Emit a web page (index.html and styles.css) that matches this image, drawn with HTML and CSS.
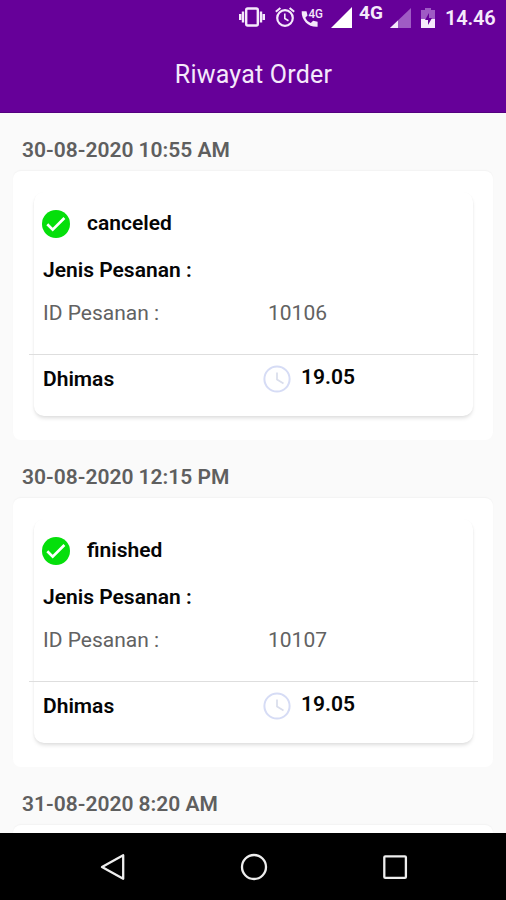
FILE: index.html
```html
<!DOCTYPE html>
<html lang="id">
<head>
<meta charset="utf-8">
<title>Riwayat Order</title>
<link rel="stylesheet" href="styles.css">
</head>
<body>
<header class="top">
  <div class="status">
    <svg class="vibrate" width="26" height="20" viewBox="0 0 26 20"><rect x="7.2" y="1.5" width="11.6" height="17" rx="1.5" fill="none" stroke="currentColor" stroke-width="2.4"/><path d="M1.2 7v6M4 4.5v11M24.8 7v6M22 4.5v11" stroke="currentColor" stroke-width="2.4"/></svg>
    <svg class="alarm" width="20" height="20" viewBox="0 0 20 20" fill="none" stroke="currentColor"><circle cx="10" cy="11" r="7.8" stroke-width="2.2"/><path d="M.8 4.7 5.4.9M19.2 4.7 14.6.9" stroke-width="2"/><path d="M9.8 6.5v5l3.7 2.3" stroke-width="1.6"/></svg>
    <svg class="call" width="23" height="22" viewBox="0 0 23 22"><path d="M.7 4.2h4.8l1 4.2-2.2 2.3c1.2 2.5 3 4.2 5.5 5.3l2.3-2.2 4.5 1v5C8 20.6.2 13.5.7 4.2Z" fill="currentColor"/><text x="7.5" y="11.2" class="call-label" textLength="14.5" lengthAdjust="spacingAndGlyphs">4G</text></svg>
    <svg class="signal" width="21" height="21" viewBox="0 0 21 21"><path d="M0 21 21 0v21Z" fill="currentColor"/></svg>
    <span class="network">4G</span>
    <svg class="signal-low" width="21" height="21" viewBox="0 0 21 21"><path d="M0 21 21 1v20Z" fill="#9f5bc4"/><path d="m0 21 8-7.6V21Z" fill="currentColor"/></svg>
    <svg class="battery" width="14" height="20" viewBox="0 0 14 20"><path d="M4 0h6v2h4v9H0V2h4Z" fill="#9f5bc4"/><path d="M0 11h14v9H0Z" fill="currentColor"/><path d="M8 5 4 12h3v5l4-7H8Z" fill="#609"/></svg>
    <span class="clock">14.46</span>
  </div>
  <h1 class="title">Riwayat Order</h1>
</header>
<main class="list">
  <section class="entry">
    <h2 class="date">30-08-2020 10:55 AM</h2>
    <div class="panel">
      <article class="card">
        <div class="state">
          <svg width="28" height="28" viewBox="0 0 28 28"><circle cx="14" cy="14" r="14" fill="#05df0b"/><path d="m5.3 14.3 5.4 5.3L22.4 8" fill="none" stroke="#fff" stroke-width="2.7"/></svg>
          <span class="state-name">canceled</span>
        </div>
        <div class="kind">Jenis Pesanan :</div>
        <div class="order"><span>ID Pesanan :</span><span>10106</span></div>
        <div class="foot">
          <span class="person">Dhimas</span>
          <svg width="28" height="28" viewBox="0 0 28 28" fill="none"><circle cx="14" cy="14" r="12.6" stroke="#d6dcf5" stroke-width="2"/><path d="M14 7.5v7l6.5 4" stroke="#d9ddec" stroke-width="1.7"/></svg>
          <span class="time">19.05</span>
        </div>
      </article>
    </div>
  </section>
  <section class="entry">
    <h2 class="date">30-08-2020 12:15 PM</h2>
    <div class="panel">
      <article class="card">
        <div class="state">
          <svg width="28" height="28" viewBox="0 0 28 28"><circle cx="14" cy="14" r="14" fill="#05df0b"/><path d="m5.3 14.3 5.4 5.3L22.4 8" fill="none" stroke="#fff" stroke-width="2.7"/></svg>
          <span class="state-name">finished</span>
        </div>
        <div class="kind">Jenis Pesanan :</div>
        <div class="order"><span>ID Pesanan :</span><span>10107</span></div>
        <div class="foot">
          <span class="person">Dhimas</span>
          <svg width="28" height="28" viewBox="0 0 28 28" fill="none"><circle cx="14" cy="14" r="12.6" stroke="#d6dcf5" stroke-width="2"/><path d="M14 7.5v7l6.5 4" stroke="#d9ddec" stroke-width="1.7"/></svg>
          <span class="time">19.05</span>
        </div>
      </article>
    </div>
  </section>
  <section class="entry">
    <h2 class="date">31-08-2020 8:20 AM</h2>
    <div class="panel"></div>
  </section>
</main>
<nav class="nav">
  <svg width="28" height="28" viewBox="0 0 28 28"><path d="M3 14 24.2 2.2v23.6Z"/></svg>
  <svg width="28" height="28" viewBox="0 0 28 28"><circle cx="14" cy="14" r="12"/></svg>
  <svg width="28" height="28" viewBox="0 0 28 28"><rect x="3.3" y="3.3" width="21.6" height="21.6" rx="1"/></svg>
</nav>
</body>
</html>
```
FILE: styles.css
```css
* { box-sizing: border-box; }
body {
  margin: 0;
  height: 900px;
  display: flex;
  flex-direction: column;
  overflow: hidden;
  background: #fafafa;
  font-family: Roboto, sans-serif;
  color: #050505;
}
svg { display: block; flex: none; overflow: visible; }
.top {
  height: 113px;
  flex: none;
  background: #660099;
  border-bottom: 1px solid #54007f;
}
.status {
  height: 36px;
  display: flex;
  padding: 7px 0 0 239px;
  color: #f5e9fb;
}
.vibrate { margin-right: 10px; }
.alarm { margin-right: 6px; }
.call { margin-right: 7px; }
.call-label { font-size: 13px; font-weight: 500; fill: currentColor; }
.signal { margin-right: 7px; color: #fff; }
.network {
  width: 31px;
  margin-top: -4px;
  font-size: 19px;
  line-height: 20px;
  font-weight: 700;
}
.signal-low { margin-right: 10px; }
.battery { margin: 1px 10px 0 0; }
.clock {
  font-size: 20px;
  line-height: 22px;
  font-weight: 600;
  letter-spacing: -.2px;
}
.title {
  margin: 23px 0 0;
  padding-left: 1px;
  text-align: center;
  font-size: 25px;
  line-height: 32px;
  font-weight: 400;
  letter-spacing: .22px;
  color: #f5e9fb;
}
.list {
  height: 720px;
  flex: none;
  overflow: hidden;
}
.entry { height: 327px; padding: 0 13px; }
.date {
  margin: 0;
  height: 58px;
  padding: 23px 0 0 9px;
  font-size: 21px;
  line-height: 28px;
  font-weight: 600;
  color: #5f5f5f;
}
.panel {
  height: 269px;
  padding: 21px 20px 0 21px;
  background: #fff;
  border-radius: 8px;
  box-shadow: 0 -1px 1px #f3f3f3;
}
.card {
  height: 224px;
  padding: 18px 8px 0;
  background: #fff;
  border-radius: 10px;
  box-shadow: 0 3px 4px -1px #dedede, 0 1px 2px #f1f1f1;
}
.state {
  height: 28px;
  display: flex;
  gap: 17px;
}
.state-name { font-size: 21px; line-height: 26px; font-weight: 600; }
.kind {
  margin: 18px 0 0 1px;
  font-size: 21px;
  line-height: 28px;
  font-weight: 600;
}
.order {
  display: grid;
  grid-template-columns: 225px 1fr;
  margin: 15px 0 27px 1px;
  font-size: 21px;
  line-height: 28px;
  color: #626262;
}
.foot {
  display: grid;
  grid-template-columns: 211px 28px 1fr;
  column-gap: 10px;
  margin: 0 -13px 0 -13px;
  padding: 10px 0 0 14px;
  border-top: 1px solid #dedede;
  font-size: 21px;
  line-height: 28px;
  font-weight: 600;
}
.time { margin: -2px 0 0 -1px; }
.foot svg { margin-left: -1px; }
.nav {
  height: 67px;
  flex: none;
  display: flex;
  gap: 113px;
  padding: 20px 0 0 99px;
  background: #000;
}
.nav svg { fill: none; stroke: #eee; stroke-width: 2.3; stroke-linejoin: round; }
```
